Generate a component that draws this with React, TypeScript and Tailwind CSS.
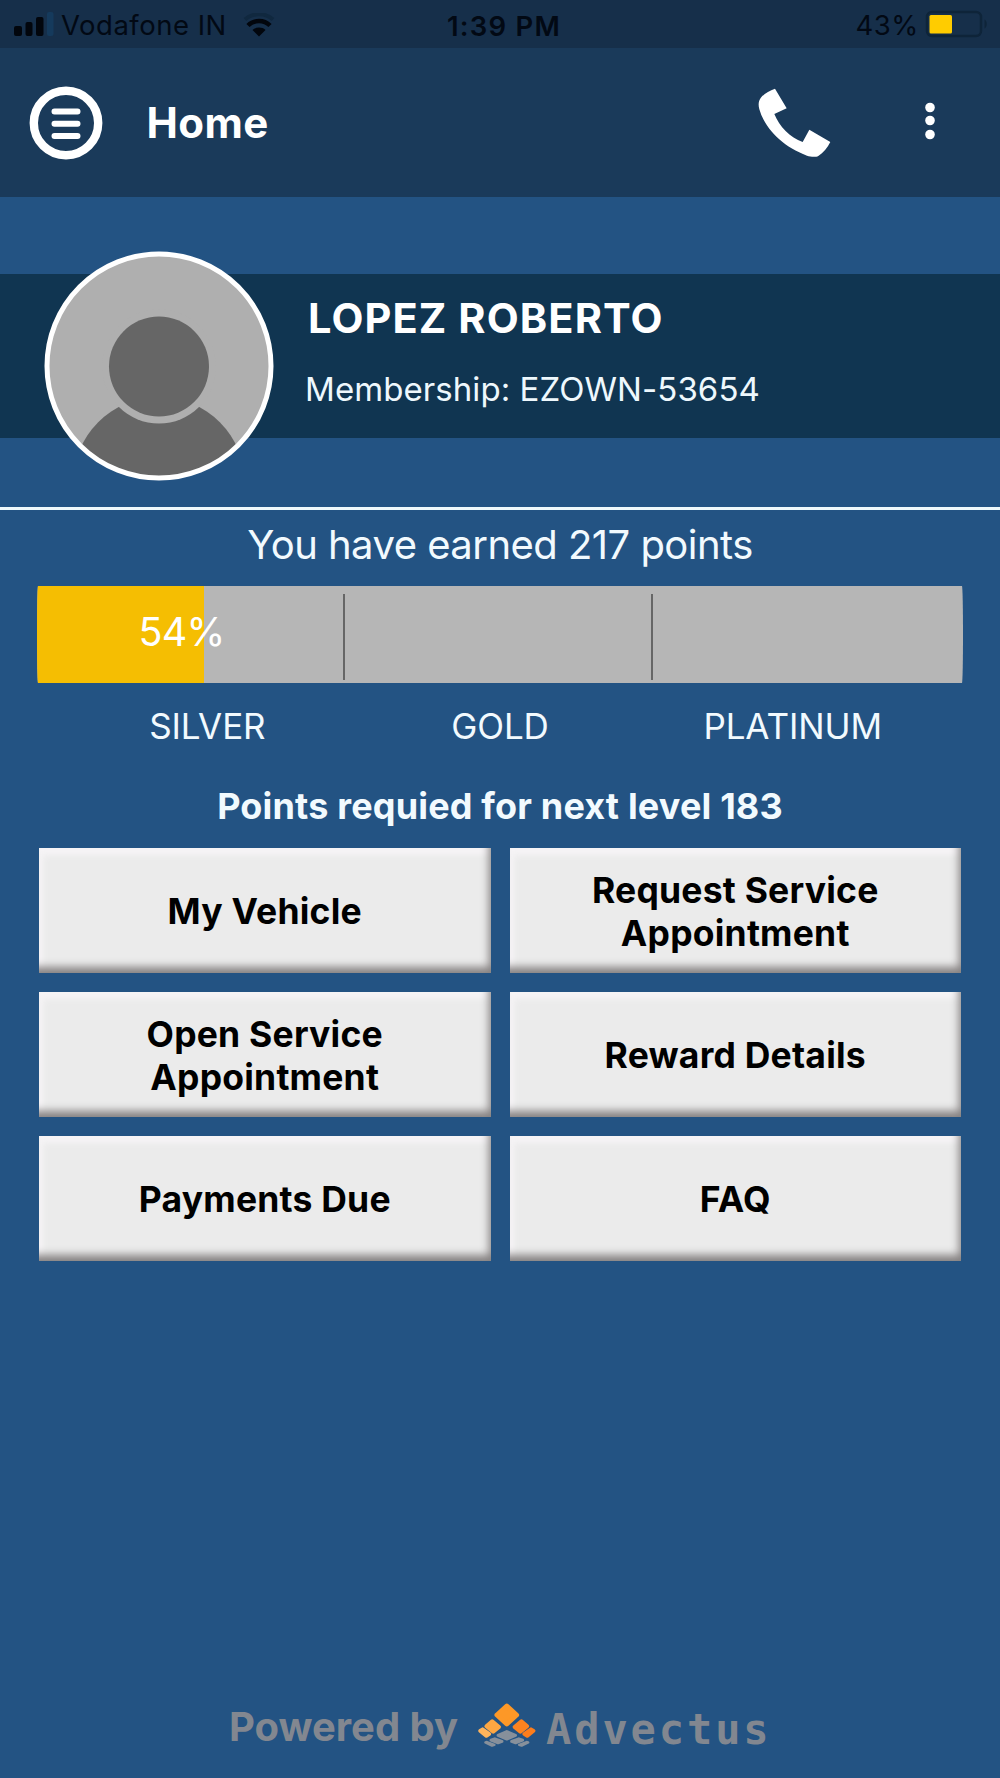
import React from 'react';

interface MenuItem {
  id: string;
  label: string;
}

const MENU_ITEMS: MenuItem[] = [
  { id: 'vehicle', label: 'My Vehicle' },
  { id: 'request', label: 'Request Service Appointment' },
  { id: 'open', label: 'Open Service Appointment' },
  { id: 'rewards', label: 'Reward Details' },
  { id: 'payments', label: 'Payments Due' },
  { id: 'faq', label: 'FAQ' },
];

const TIERS = ['SILVER', 'GOLD', 'PLATINUM'];

const PROGRESS = 54;

const SignalIcon: React.FC = () => (
  <svg width="40" height="24" viewBox="0 0 40 24" fill="#02060d">
    <rect x="0" y="14" width="8" height="10" rx="2" />
    <rect x="11.5" y="10" width="7" height="14" rx="2" />
    <rect x="22" y="5" width="7.5" height="19" rx="2" />
    <rect x="33" y="0" width="6.5" height="24" rx="2" fill="#153a5c" />
  </svg>
);

const WifiIcon: React.FC = () => (
  <svg width="32" height="24" viewBox="0 0 32 24" fill="none">
    <path d="M2 6.5 C9.5 -0.5 22.5 -0.5 30 6.5" stroke="#10283f" strokeWidth="4" />
    <path d="M5 12.5 C11 6.5 21 6.5 27 12.5" stroke="#02060d" strokeWidth="4.5" />
    <path d="M9.5 17 C13 13.8 19 13.8 22.5 17 L16 23.5 Z" fill="#02060d" />
  </svg>
);

const BatteryIcon: React.FC = () => (
  <svg width="63" height="28" viewBox="0 0 63 28" fill="none">
    <rect x="2" y="2" width="54" height="24" rx="5" stroke="#0e2439" strokeWidth="2.5" />
    <rect x="4.5" y="5" width="22.5" height="18.5" rx="1.5" fill="#ffcc00" />
    <path d="M59.5 9.5 C62.5 11 62.5 17 59.5 18.5 Z" fill="#0e2439" />
  </svg>
);

const MenuIcon: React.FC = () => (
  <svg width="74" height="74" viewBox="0 0 74 74" fill="none" stroke="#fff">
    <circle cx="37" cy="37" r="32.2" strokeWidth="8.4" />
    <path d="M25.5 25.5 H48.5 M25.5 37.7 H48.5 M25.5 50 H48.5" strokeWidth="6" strokeLinecap="round" />
  </svg>
);

const PhoneIcon: React.FC = () => (
  <svg width="73" height="70" viewBox="176 265 219 210" fill="#fff">
    <path d="M227 267 L262 326 L225 343 C240 380 272 414 310 427 L330 390 L393 427 C384 444 372 460 357 469 C349 473 334 472 323 468 C250 442 196 386 180 329 C176 314 178 304 184 295 C195 281 210 273 227 267 Z" />
  </svg>
);

const MoreIcon: React.FC = () => (
  <svg width="12" height="38" viewBox="0 0 12 38" fill="#fff">
    <circle cx="6" cy="5.5" r="4.8" />
    <circle cx="6" cy="18.5" r="4.8" />
    <circle cx="6" cy="32.5" r="4.8" />
  </svg>
);

const Avatar: React.FC = () => (
  <svg width="230" height="230" viewBox="0 0 230 230">
    <defs>
      <clipPath id="avatar-clip">
        <circle cx="115" cy="115" r="111" />
      </clipPath>
    </defs>
    <circle cx="115" cy="115" r="112" fill="#afafaf" />
    <g clipPath="url(#avatar-clip)" fill="#666">
      <circle cx="115" cy="232" r="86" />
      <circle cx="115" cy="115.5" r="57" fill="#afafaf" />
      <circle cx="115" cy="115.5" r="50" />
    </g>
    <circle cx="115" cy="115" r="112" fill="none" stroke="#fff" strokeWidth="5" />
  </svg>
);

const AdvectusLogo: React.FC = () => (
  <svg width="59" height="45" viewBox="0 0 59 45" strokeWidth="4" strokeLinejoin="round">
    <path d="M29.8 3.2 L39.6 12 L29.8 20.8 L20 12 Z" fill="#fd9827" stroke="#fd9827" strokeWidth="5" />
    <path d="M15.2 18.4 L22 24 L16.2 28.6 L9.4 23.2 Z" fill="#fda743" stroke="#fda743" />
    <path d="M5.6 26.2 L12.4 31 L9.4 33 L3 27.8 Z" fill="#feb45c" stroke="#feb45c" strokeWidth="3.6" />
    <path d="M44.4 18.4 L37.6 24 L43.4 28.6 L50.2 23.2 Z" fill="#fc8320" stroke="#fc8320" />
    <path d="M54 26.2 L47.2 31 L50.2 33 L56.6 27.8 Z" fill="#fc7d1c" stroke="#fc7d1c" strokeWidth="3.6" />
    <g fill="#87909b" stroke="#87909b" strokeWidth="3">
      <path d="M29.8 28.6 L38.5 32.4 L29.8 36 L21.1 32.4 Z" />
      <path d="M17.8 35.8 L25 38.4 L21 39.8 L14 37.2 Z" />
      <path d="M10 39 L17.4 41.8 L15 42.6 L8.4 39.4 Z" strokeWidth="2.4" />
      <path d="M41.8 35.8 L34.6 38.4 L38.6 39.8 L45.6 37.2 Z" />
      <path d="M49.6 39 L42.2 41.8 L44.6 42.6 L51.2 39.4 Z" strokeWidth="2.4" />
    </g>
  </svg>
);

const StatusBar: React.FC = () => (
  <div className="h-12 bg-[#162f4a] grid grid-cols-3 items-center pl-[14px] pr-[12px] text-[27.5px] leading-none text-[#020914]">
    <div className="flex items-center">
      <SignalIcon />
      <span className="ml-[7px] mt-1 tracking-[0.5px] whitespace-nowrap">Vodafone IN</span>
      <span className="ml-[16px] mt-[2px]">
        <WifiIcon />
      </span>
    </div>
    <div className="mt-[5px] text-center font-semibold tracking-[1.2px] pl-[6px]">1:39 PM</div>
    <div className="flex items-center justify-end">
      <span className="mt-[4px] mr-[6px] tracking-[0.6px]">43%</span>
      <BatteryIcon />
    </div>
  </div>
);

const Header: React.FC = () => (
  <header className="h-[149px] bg-[#1a3a5a] flex items-center pl-[28.5px] pr-[64px]">
    <button className="mt-[1px]">
      <MenuIcon />
    </button>
    <h1 className="ml-[44px] text-[42px] leading-none font-bold tracking-[0.4px] text-white">Home</h1>
    <button className="ml-auto mt-[1px]">
      <PhoneIcon />
    </button>
    <button className="ml-[93px] -mt-[3px]">
      <MoreIcon />
    </button>
  </header>
);

const Profile: React.FC = () => (
  <section className="h-[313px] border-b-3 border-[#eef8fb] pt-[77px]">
    <div className="h-[164px] bg-[#103551] flex items-center pl-[43.5px]">
      <div className="mt-[20px]">
        <Avatar />
      </div>
      <div className="ml-[31.5px] text-white">
        <h2 className="ml-[3px] text-[41.5px] leading-[50px] font-bold tracking-[1.1px]">LOPEZ ROBERTO</h2>
        <p className="mt-[25px] mb-[9px] text-[33px] leading-[42px] tracking-[0.07px] text-[#eef8fd]">
          Membership: EZOWN-53654
        </p>
      </div>
    </div>
  </section>
);

const Points: React.FC = () => (
  <section className="text-center text-[#f2fafe]">
    <p className="pt-[10px] h-[76px] text-[40px] leading-[50px] tracking-[-0.53px]">You have earned 217 points</p>
    <div className="relative h-[97px] mx-[37px] rounded-[1px/48px] overflow-hidden bg-[#b6b6b6]">
      {/* the fill is relative to the first tier only */}
      <div className="h-full w-1/3">
        <div className="h-full bg-[#f5be02]" style={{ width: `${PROGRESS}%` }} />
      </div>
      <div className="absolute inset-0 grid grid-cols-3 pt-2 pb-[3px] pr-[2px]">
        <div className="border-r-2 border-[#666] flex items-center justify-center text-[39.5px] leading-none tracking-[-0.8px] text-white pr-[17px] pb-[9px]">
          {PROGRESS}%
        </div>
        <div className="border-r-2 border-[#666]" />
        <div />
      </div>
    </div>
    <div className="grid grid-cols-3 px-[61px] pt-[22px] text-[35px] leading-[42px]">
      {TIERS.map((tier) => (
        <span key={tier} className="tracking-[-0.1px]">
          {tier}
        </span>
      ))}
    </div>
    <p className="pt-[37px] text-[36px] leading-[44px] font-bold tracking-[0.17px]">
      Points requied for next level 183
    </p>
  </section>
);

const Menu: React.FC = () => (
  <nav className="grid grid-cols-2 gap-x-[19px] gap-y-5 px-[39px] pt-5">
    {MENU_ITEMS.map((item) => (
      <button
        key={item.id}
        className="h-[124.5px] px-12 pt-[3px] -mb-[0.5px] bg-[#ebebeb] text-black text-[35.5px] leading-[43px] font-bold tracking-[0.22px] shadow-[inset_-5px_-9px_9px_-3px_#858181,inset_6px_9px_6px_-2px_#f6f4f6]"
      >
        {item.label}
      </button>
    ))}
  </nav>
);

const Footer: React.FC = () => (
  <footer className="mt-auto h-[78px] flex items-start pl-[229px] text-[#828790] leading-[44px]">
    <span className="mt-[5px] text-[40px] font-bold tracking-[-0.02px]">Powered by</span>
    <span className="ml-[19px] mt-[3px]">
      <AdvectusLogo />
    </span>
    <span className="ml-[10px] mt-[8px] font-['DejaVu_Sans_Mono',monospace] text-[42px] font-bold tracking-[2.9px]">
      Advectus
    </span>
  </footer>
);

export default function App() {
  return (
    <div className="w-full h-screen min-h-[1778px] flex flex-col bg-[#235383] font-[Inter,sans-serif]">
      <StatusBar />
      <Header />
      <Profile />
      <Points />
      <Menu />
      <Footer />
    </div>
  );
}
